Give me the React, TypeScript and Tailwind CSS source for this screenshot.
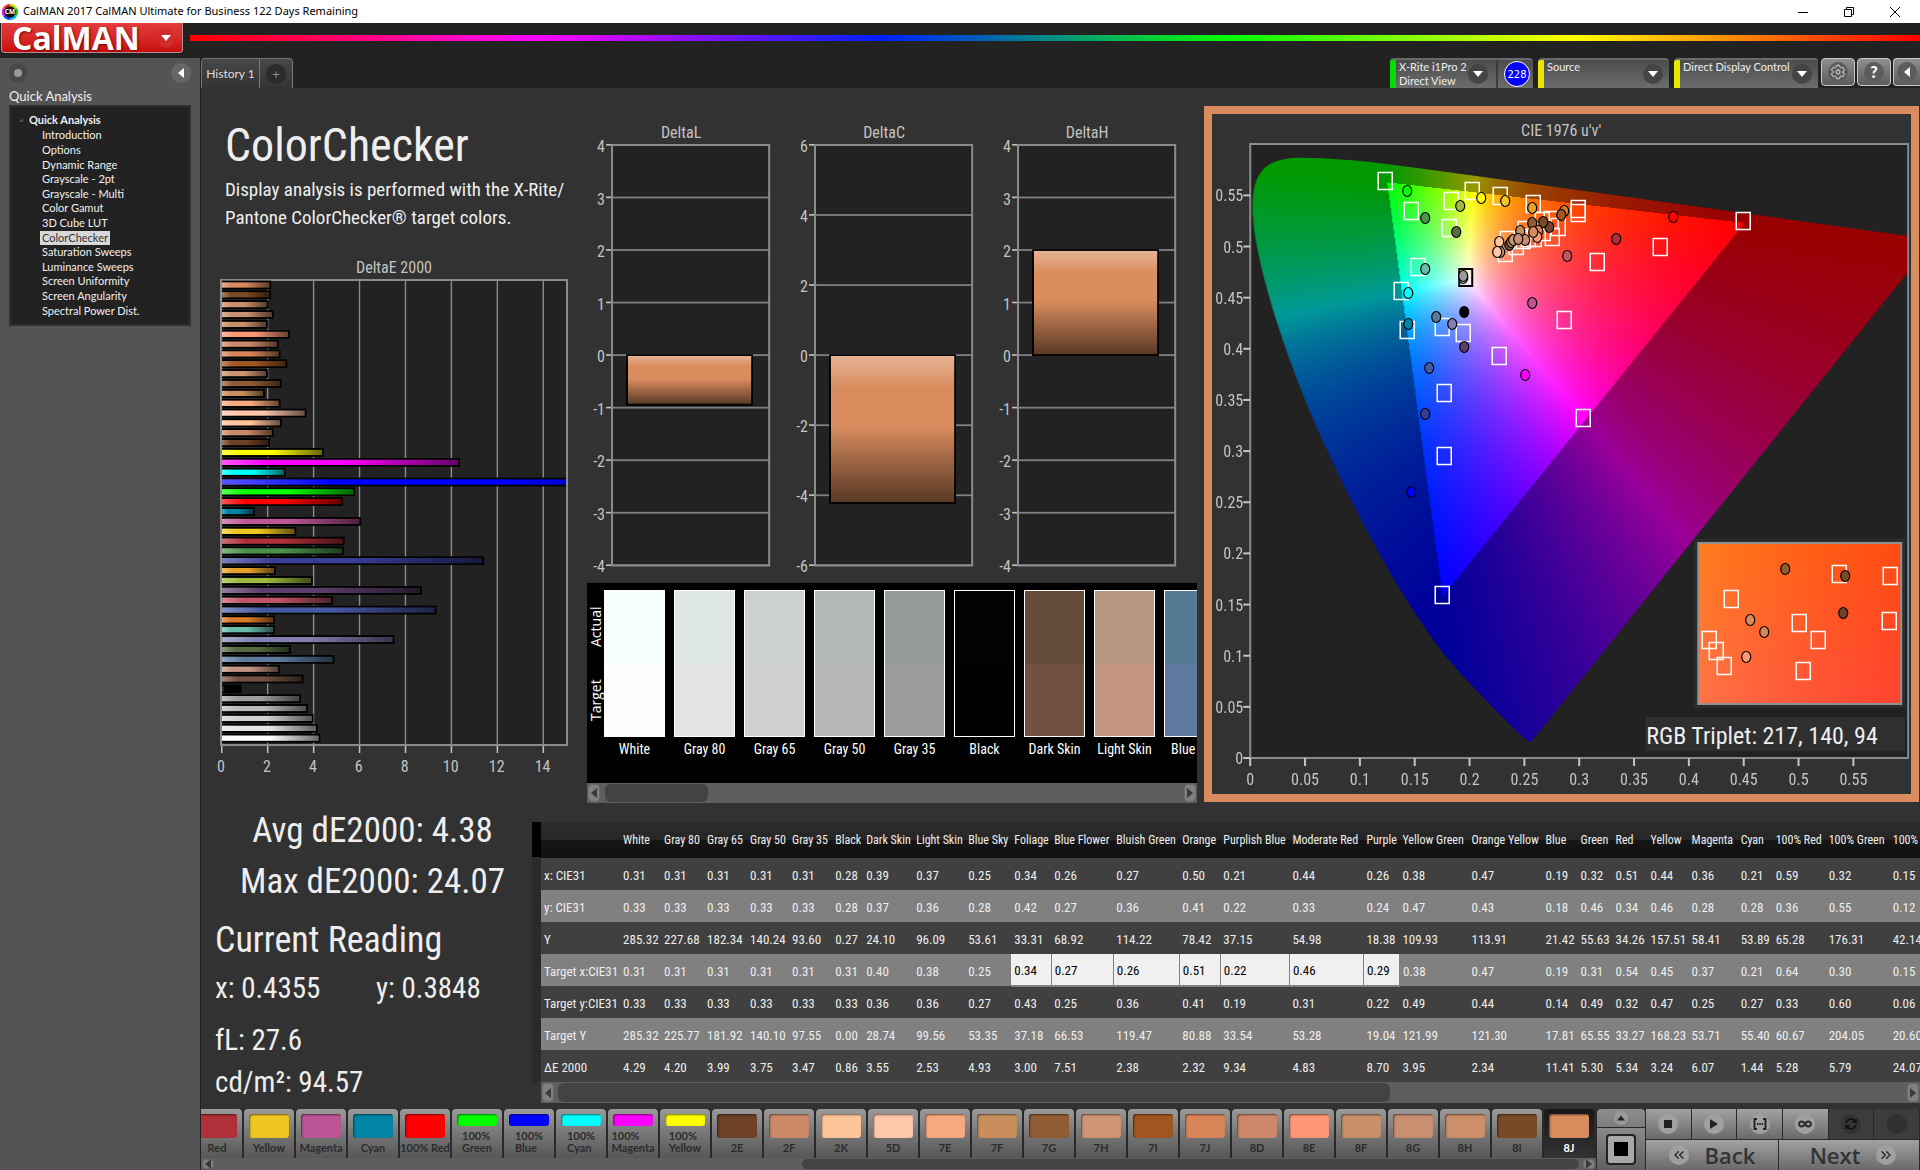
import { useEffect, useRef } from "react";
import { IoSettingsOutline } from "react-icons/io5";
import { FaInfinity, FaSyncAlt } from "react-icons/fa";
import { ChevronsLeft, ChevronsRight } from "lucide-react";
import clsx from "clsx";

const AXIS = "font-['Roboto_Condensed','Roboto',sans-serif]";

const navItems = [
  "Introduction", "Options", "Dynamic Range", "Grayscale - 2pt", "Grayscale - Multi", "Color Gamut", "3D Cube LUT",
  "ColorChecker", "Saturation Sweeps", "Luminance Sweeps", "Screen Uniformity", "Screen Angularity", "Spectral Power Dist.",
];

// [value, color], top to bottom
const deltaE: [number, string][] = [
  [2.15, "#d98c5e"], [2.15, "#7a4a25"], [2.03, "#cd8f6a"], [2.25, "#c88f70"], [2.0, "#c78f6a"], [2.95, "#fd9776"],
  [2.47, "#cf896a"], [2.55, "#d8855a"], [2.85, "#a05620"], [2.0, "#cf9573"], [2.6, "#915c33"], [1.87, "#c88f5d"],
  [2.55, "#f7a97d"], [3.68, "#fec7ab"], [2.6, "#ffc59a"], [2.25, "#cc8a68"], [2.1, "#6f4126"], [4.43, "#ffff00"],
  [10.37, "#ff00ff"], [2.77, "#00ffff"], [24.07, "#0000ff"], [5.79, "#00ff00"], [5.28, "#ff0000"], [1.44, "#0085a7"],
  [6.07, "#bb5595"], [3.24, "#edc71f"], [5.34, "#af3038"], [5.3, "#4a9449"], [11.41, "#383d96"], [2.34, "#e7a22c"],
  [3.95, "#9fba3c"], [8.7, "#5c3d6b"], [4.83, "#c35465"], [9.34, "#4659a7"], [2.32, "#d97b28"], [2.32, "#67bdaa"],
  [7.51, "#8280b0"], [3.0, "#576c41"], [4.9, "#5b7a9c"], [2.53, "#c49681"], [3.55, "#735142"], [0.86, "#000000"],
  [3.45, "#9e9e9e"], [3.75, "#b9b9b9"], [3.99, "#cfcfcf"], [4.17, "#e6e6e6"], [4.29, "#ffffff"],
];

const swatches: [string, string, string][] = [
  ["White", "#f5fffe", "#fdfdfd"],
  ["Gray 80", "#dfe7e4", "#e4e4e4"],
  ["Gray 65", "#cbd1cf", "#cfcfcf"],
  ["Gray 50", "#b4bab8", "#b8b8b8"],
  ["Gray 35", "#959998", "#9c9c9c"],
  ["Black", "#020205", "#000000"],
  ["Dark Skin", "#654b3a", "#725142"],
  ["Light Skin", "#b9967f", "#c39581"],
  ["Blue Sky", "#577a94", "#5d7a9e"],
];

const columns: [string, number][] = [
  ["White", 41], ["Gray 80", 43], ["Gray 65", 43], ["Gray 50", 42], ["Gray 35", 43], ["Black", 31], ["Dark Skin", 50],
  ["Light Skin", 52], ["Blue Sky", 46], ["Foliage", 40], ["Blue Flower", 62], ["Bluish Green", 66], ["Orange", 41],
  ["Purplish Blue", 69], ["Moderate Red", 74], ["Purple", 36], ["Yellow Green", 69], ["Orange Yellow", 74], ["Blue", 35],
  ["Green", 35], ["Red", 35], ["Yellow", 41], ["Magenta", 49], ["Cyan", 35], ["100% Red", 53], ["100% Green", 64], ["100% Blue", 64],
];

const rows: [string, string[]][] = [
  ["x: CIE31", "0.31 0.31 0.31 0.31 0.31 0.28 0.39 0.37 0.25 0.34 0.26 0.27 0.50 0.21 0.44 0.26 0.38 0.47 0.19 0.32 0.51 0.44 0.36 0.21 0.59 0.32 0.15".split(" ")],
  ["y: CIE31", "0.33 0.33 0.33 0.33 0.33 0.28 0.37 0.36 0.28 0.42 0.27 0.36 0.41 0.22 0.33 0.24 0.47 0.43 0.18 0.46 0.34 0.46 0.28 0.28 0.36 0.55 0.12".split(" ")],
  ["Y", "285.32 227.68 182.34 140.24 93.60 0.27 24.10 96.09 53.61 33.31 68.92 114.22 78.42 37.15 54.98 18.38 109.93 113.91 21.42 55.63 34.26 157.51 58.41 53.89 65.28 176.31 42.14".split(" ")],
  ["Target x:CIE31", "0.31 0.31 0.31 0.31 0.31 0.31 0.40 0.38 0.25 0.34 0.27 0.26 0.51 0.22 0.46 0.29 0.38 0.47 0.19 0.31 0.54 0.45 0.37 0.21 0.64 0.30 0.15".split(" ")],
  ["Target y:CIE31", "0.33 0.33 0.33 0.33 0.33 0.33 0.36 0.36 0.27 0.43 0.25 0.36 0.41 0.19 0.31 0.22 0.49 0.44 0.14 0.49 0.32 0.47 0.25 0.27 0.33 0.60 0.06".split(" ")],
  ["Target Y", "285.32 225.77 181.92 140.10 97.55 0.00 28.74 99.56 53.35 37.18 66.53 119.47 80.88 33.54 53.28 19.04 121.99 121.30 17.81 65.55 33.27 168.23 53.71 55.40 60.67 204.05 20.60".split(" ")],
  ["ΔE 2000", "4.29 4.20 3.99 3.75 3.47 0.86 3.55 2.53 4.93 3.00 7.51 2.38 2.32 9.34 4.83 8.70 3.95 2.34 11.41 5.30 5.34 3.24 6.07 1.44 5.28 5.79 24.07".split(" ")],
];

const patterns: [string, string][] = [
  ["Red", "#af3038"], ["Yellow", "#edc71f"], ["Magenta", "#bb5595"], ["Cyan", "#0085a7"], ["100% Red", "#ff0000"],
  ["100% Green", "#00ff00"], ["100% Blue", "#0000ff"], ["100% Cyan", "#00ffff"], ["100% Magenta", "#ff00ff"], ["100% Yellow", "#ffff00"],
  ["2E", "#6f4126"], ["2F", "#cc8a68"], ["2K", "#ffc59a"], ["5D", "#fec7ab"], ["7E", "#f7a97d"], ["7F", "#c88f5d"],
  ["7G", "#915c33"], ["7H", "#cf9573"], ["7I", "#a05620"], ["7J", "#d8855a"], ["8D", "#cf896a"], ["8E", "#fd9776"],
  ["8F", "#c78f6a"], ["8G", "#c88f70"], ["8H", "#cd8f6a"], ["8I", "#7a4a25"], ["8J", "#d98c5e"],
];

// CIE 1931 xy spectral locus
const locus = [
  [0.1741, 0.005], [0.1733, 0.0048], [0.1714, 0.0051], [0.1689, 0.0069], [0.1644, 0.0109], [0.1566, 0.0177], [0.144, 0.0297],
  [0.1355, 0.0399], [0.1241, 0.0578], [0.1096, 0.0868], [0.0913, 0.1327], [0.0687, 0.2007], [0.0454, 0.295], [0.0235, 0.4127],
  [0.0082, 0.5384], [0.0039, 0.6548], [0.0139, 0.7502], [0.0389, 0.812], [0.0743, 0.8338], [0.1142, 0.8262], [0.1547, 0.8059],
  [0.2296, 0.7543], [0.3016, 0.6923], [0.3731, 0.6245], [0.4441, 0.5547], [0.5125, 0.4866], [0.5752, 0.4242], [0.627, 0.3725],
  [0.6658, 0.334], [0.6915, 0.3083], [0.719, 0.2809], [0.7347, 0.2653],
].map(([x, y]) => {
  const d = -2 * x + 12 * y + 3;
  return [(4 * x) / d, (9 * y) / d];
});

// full brightness inside Rec.709, dimmed outside of it
const uvToRgb = (u: number, v: number) => {
  const d = 6 * u - 16 * v + 12;
  const x = (9 * u) / d;
  const y = (4 * v) / d;
  const X = x / y;
  const Z = (1 - x - y) / y;
  const lin = [
    3.2406 * X - 1.5372 - 0.4986 * Z,
    -0.9689 * X + 1.8758 + 0.0415 * Z,
    0.0557 * X - 0.204 + 1.057 * Z,
  ];
  const max = Math.max(...lin);
  const k = lin.every((c) => c >= 0) ? 255 : 153;
  return lin.map((c) => (Math.max(c, 0) / max) * k);
};

interface DiagramProps {
  u: [number, number]
  v: [number, number]
  clip?: boolean
}

const Chromaticity = ({ u, v, clip }: DiagramProps) => {
  const ref = useRef<HTMLCanvasElement>(null);

  useEffect(() => {
    const canvas = ref.current!;
    const { width: w, height: h } = canvas;
    const ctx = canvas.getContext("2d")!;
    const layer = document.createElement("canvas");
    layer.width = w;
    layer.height = h;
    const lctx = layer.getContext("2d")!;
    const image = lctx.createImageData(w, h);
    for (let py = 0; py < h; py++) {
      for (let px = 0; px < w; px++) {
        const uu = u[0] + ((px + 0.5) / w) * (u[1] - u[0]);
        const vv = v[1] - ((py + 0.5) / h) * (v[1] - v[0]);
        const [r, g, b] = uvToRgb(uu, vv);
        image.data.set([r, g, b, 255], (py * w + px) * 4);
      }
    }
    lctx.putImageData(image, 0, 0);
    ctx.clearRect(0, 0, w, h);
    ctx.save();
    if (clip) {
      const pts = locus.map(([a, b]) => [((a - u[0]) / (u[1] - u[0])) * w, ((v[1] - b) / (v[1] - v[0])) * h]);
      ctx.beginPath();
      ctx.moveTo(pts[0][0], pts[0][1]);
      for (let i = 1; i < pts.length - 1; i++) {
        ctx.quadraticCurveTo(pts[i][0], pts[i][1], (pts[i][0] + pts[i + 1][0]) / 2, (pts[i][1] + pts[i + 1][1]) / 2);
      }
      ctx.lineTo(pts[pts.length - 1][0], pts[pts.length - 1][1]);
      ctx.closePath();
      ctx.clip();
    }
    ctx.drawImage(layer, 0, 0);
    ctx.restore();
  }, [u, v, clip]);

  return <canvas ref={ref} width={658} height={614} className="block w-full h-full" />;
};

const FULL_U: [number, number] = [0, 0.6];
const FULL_V: [number, number] = [0, 0.6];
const INSET_U: [number, number] = [0.25, 0.29];
const INSET_V: [number, number] = [0.5, 0.528];

const targets = [
  [185, 81], [211, 111], [251, 101], [272, 91], [300, 96], [333, 104], [378, 109], [378, 113], [249, 128], [218, 167],
  [201, 191], [207, 230], [242, 227], [263, 233], [299, 256], [244, 293], [244, 356], [383, 318], [364, 220], [397, 162],
  [460, 147], [543, 121], [242, 495], [358, 127], [352, 137], [351, 120], [342, 121], [325, 130], [307, 140], [316, 146],
  [305, 153], [323, 140], [328, 138], [334, 138], [343, 132],
];

const measured: [number, number, string][] = [
  [207, 91, "#00ff00"], [225, 118, "#4a9449"], [260, 106, "#9fba3c"], [281, 98, "#ffff00"], [305, 101, "#edc71f"],
  [332, 108, "#e7a22c"], [256, 132, "#576c41"], [225, 169, "#67bdaa"], [208, 193, "#00ffff"], [208, 224, "#0085a7"],
  [236, 217, "#5b7a9c"], [252, 224, "#8280b0"], [264, 212, "#000000"], [264, 247, "#5c3d6b"], [229, 268, "#4659a7"],
  [225, 314, "#383d96"], [211, 392, "#0000ff"], [325, 275, "#ff00ff"], [332, 203, "#bb5595"], [367, 156, "#c35465"],
  [473, 117, "#ff0000"], [416, 139, "#af3038"], [364, 111, "#d97b28"], [361, 115, "#a05620"], [349, 127, "#73422a"],
  [343, 122, "#7a4a25"], [332, 123, "#915c33"], [320, 131, "#c68c5c"], [338, 131, "#d8855a"], [337, 137, "#fd9776"],
  [333, 132, "#d98c5e"], [309, 145, "#755140"], [311, 142, "#c78f6a"], [313, 140, "#cf9573"], [325, 140, "#cf896a"],
  [318, 139, "#c88f70"], [299, 142, "#ffc59a"], [300, 152, "#c49681"], [297, 152, "#fec7ab"], [263, 178, "#b9b9b9"],
  [263, 176, "#9a9a9a"],
];

const insetTargets = [[639, 474], [690, 476], [531, 499], [509, 540], [516, 551], [524, 566], [599, 523], [618, 540], [603, 571], [689, 521]];
const insetMeasured: [number, number, string][] = [
  [585, 469, "#915c33"], [645, 476, "#7a4a25"], [643, 513, "#73422a"], [550, 520, "#d98c5e"], [564, 532, "#d8855a"], [546, 557, "#fd9776"],
];

const Dot = ({ x, y, fill }: { x: number; y: number; fill: string }) => (
  <ellipse cx={x} cy={y} rx="4.5" ry="5.5" fill={fill} stroke="#000" strokeWidth="1.2" />
);

const Box = ({ x, y }: { x: number; y: number }) => (
  <rect x={x - 7} y={y - 8.5} width="14" height="17" fill="none" stroke="#fff" strokeWidth="1.5" />
);

const CieChart = () => {
  const ticks = Array.from({ length: 12 }, (_, i) => i);
  const label = (i: number) => String(Math.round(i * 5) / 100);
  return (
    <section className="flex-[715] border-8 border-[#d98c5e] bg-[#323232]">
      <svg viewBox="12 14 699 680" className={`block w-full h-full text-base ${AXIS}`}>
        <text x="361" y="36" textAnchor="middle" fill="#c3c3c3">CIE 1976 u'v'</text>
        <rect x="50" y="44" width="658" height="614" fill="#222" />
        <foreignObject x="50" y="44" width="658" height="614">
          <Chromaticity u={FULL_U} v={FULL_V} clip />
        </foreignObject>
        <rect x="50" y="44" width="658" height="614" fill="none" stroke="#8b8b8b" strokeWidth="2" />
        {ticks.map((i) => (
          <g key={i} fill="#c3c3c3" stroke="none">
            <text x="43" y={664 - i * 51.15} textAnchor="end">{label(i)}</text>
            <rect x="43" y={657 - i * 51.15} width="7" height="2" />
            <text x={50 + i * 54.83} y="685" textAnchor="middle">{label(i)}</text>
            <rect x={49 + i * 54.83} y="658" width="2" height="8" />
          </g>
        ))}
        {targets.map(([x, y], i) => <Box key={i} x={x} y={y} />)}
        <rect x="259" y="169" width="13" height="17" fill="none" stroke="#000" strokeWidth="2" />
        {measured.map(([x, y, c], i) => <Dot key={i} x={x} y={y} fill={c} />)}

        <rect x="494" y="439" width="211" height="169" fill="#2c2c2c" />
        <foreignObject x="498" y="443" width="203" height="161">
          <Chromaticity u={INSET_U} v={INSET_V} />
        </foreignObject>
        <rect x="498" y="443" width="203" height="161" fill="none" stroke="#909090" strokeWidth="2" />
        {insetTargets.map(([x, y], i) => <Box key={i} x={x} y={y} />)}
        {insetMeasured.map(([x, y, c], i) => <Dot key={i} x={x} y={y} fill={c} />)}
        <rect x="445" y="617" width="260" height="34" fill="#2f2f2f" />
        <text x="446" y="644" fontSize="24" fill="#eee">RGB Triplet: 217, 140, 94</text>
      </svg>
    </section>
  );
};

const DeltaEChart = () => (
  <svg viewBox="0 0 386 530" className={`block w-full text-base ${AXIS}`}>
    <defs>
      <linearGradient id="sheenX">
        <stop offset="0" stopColor="#fff" stopOpacity="0.35" />
        <stop offset="0.2" stopColor="#fff" stopOpacity="0" />
        <stop offset="0.5" stopColor="#000" stopOpacity="0" />
        <stop offset="1" stopColor="#000" stopOpacity="0.6" />
      </linearGradient>
      <clipPath id="plotE"><rect x="21" y="26" width="344" height="465" /></clipPath>
    </defs>
    <text x="193" y="19" textAnchor="middle" fill="#c3c3c3">DeltaE 2000</text>
    <rect x="20" y="26" width="346" height="465" fill="#222" />
    {[0, 2, 4, 6, 8, 10, 12, 14].map((n) => (
      <g key={n}>
        <rect x={20 + n * 22.97} y="26" width="1.4" height="465" fill="#8b8b8b" />
        <rect x={20 + n * 22.97} y="491" width="1.5" height="8" fill="#c3c3c3" />
        <text x={20 + n * 22.97} y="518" textAnchor="middle" fill="#c3c3c3">{n}</text>
      </g>
    ))}
    <rect x="20" y="26" width="346" height="465" fill="none" stroke="#8b8b8b" strokeWidth="2" />
    <g clipPath="url(#plotE)" stroke="#000" strokeWidth="1.4">
      {deltaE.map(([value, color], i) => (
        <g key={i}>
          <rect x="20" y={27.5 + i * 9.85} width={value * 22.97} height="7" fill={color} />
          <rect x="20" y={27.5 + i * 9.85} width={value * 22.97} height="7" fill="url(#sheenX)" />
        </g>
      ))}
    </g>
  </svg>
);

interface DeltaProps {
  title: string
  max: number
  step: number
  value: number
}

const DeltaChart = ({ title, max, step, value }: DeltaProps) => {
  const ticks: number[] = [];
  for (let n = max; n >= -max; n -= step) ticks.push(n);
  const y = (n: number) => 245 - (n / max) * 210;
  return (
    <svg viewBox="0 0 203 470" className={`block flex-1 min-w-0 text-base ${AXIS}`}>
      <defs>
        <linearGradient id="sheenY" x1="0" y1="0" x2="0" y2="1">
          <stop offset="0" stopColor="#fff" stopOpacity="0.35" />
          <stop offset="0.22" stopColor="#fff" stopOpacity="0" />
          <stop offset="0.48" stopColor="#000" stopOpacity="0" />
          <stop offset="1" stopColor="#000" stopOpacity="0.6" />
        </linearGradient>
      </defs>
      <text x="94" y="28" textAnchor="middle" fill="#c3c3c3">{title}</text>
      <rect x="25" y="35" width="157" height="420" fill="#222" />
      {ticks.map((n) => (
        <g key={n} fill="#c3c3c3">
          <text x="18" y={y(n) + 7} textAnchor="end">{n}</text>
          <rect x="19" y={y(n) - 1} width="6" height="1.6" />
          <rect x="25" y={y(n) - 1} width="157" height="1.8" fill="#808080" />
        </g>
      ))}
      <rect x="25" y="35" width="157" height="420" fill="none" stroke="#8b8b8b" strokeWidth="2" />
      <g stroke="#000" strokeWidth="1.5">
        <rect x="40" y={y(Math.max(value, 0))} width="125" height={(Math.abs(value) / max) * 210} fill="#d98c5e" />
        <rect x="40" y={y(Math.max(value, 0))} width="125" height={(Math.abs(value) / max) * 210} fill="url(#sheenY)" />
      </g>
    </svg>
  );
};

const ScrollArrow = ({ dir }: { dir: "left" | "right" }) => (
  <button aria-label={`Scroll ${dir}`} className="flex items-center justify-center w-3 h-full shrink-0 rounded bg-[#808080] border border-[#6c6c6c]">
    <svg viewBox="0 0 6 10" className="w-1.5 h-3"><path d={dir === "left" ? "M6 0v10L0 5z" : "M0 0v10l6-5z"} fill="#3a3a3a" /></svg>
  </button>
);

const ScrollBar = ({ className, before, thumb }: { className: string; before: string; thumb: string }) => (
  <div className={clsx("flex items-stretch gap-1 bg-[#5e5e5e] p-px", className)}>
    <ScrollArrow dir="left" />
    <div className="flex flex-1">
      <div className={before}></div>
      <div className={clsx("rounded-md bg-[#434343]", thumb)}></div>
    </div>
    <ScrollArrow dir="right" />
  </div>
);

const ROUND = "flex items-center justify-center shrink-0 rounded-full";

const DeviceBox = ({ lines, stripe, className, badge }: { lines: string[]; stripe: string; className: string; badge?: string }) => (
  <div className={clsx("flex rounded-t border-t-2 border-[#6a6a6a] bg-linear-to-b from-[#4c4c4c] to-[#6c6c6c] overflow-hidden", className)}>
    <button className="flex flex-1 items-stretch text-left">
      <span className={clsx("w-1.5 shrink-0", stripe)}></span>
      <span className="flex-1 pl-[3px] text-[11px] leading-[14px] text-[#eee] whitespace-nowrap">
        {lines.map((l) => <span key={l} className="block">{l}</span>)}
      </span>
      <span className={clsx(ROUND, "w-5 h-5 mt-1 -ml-4 bg-[#454545]", badge ? "mr-2" : "mr-1.5")}>
        <svg viewBox="0 0 10 6" className="w-2.5 h-1.5"><path d="M0 0h10L5 6z" fill="#fff" /></svg>
      </span>
    </button>
    {badge && (
      <div className="flex items-center w-[37px] border-l-2 border-[#3c3c3c] pl-1.5">
        <span className={`${ROUND} size-[26px] border border-white bg-[#0000ff] text-[10px] text-white font-['DejaVu_Sans',sans-serif]`}>{badge}</span>
      </div>
    )}
  </div>
);

const TOOL = "flex items-center justify-center h-7 rounded border border-[#c8c8c8] bg-linear-to-b from-[#8f8f8f] to-[#5c5c5c]";

const Header = () => (
  <>
    <div className="flex items-center h-[23px] bg-white text-black font-['Noto_Sans',sans-serif] text-[11px]">
      <svg viewBox="0 0 16 16" className="w-4 h-4 ml-0.5 mr-[5px]">
        <path d="M8 0a8 8 0 0 1 7 4L8 8z" fill="#b5e000" />
        <path d="M15 4a8 8 0 0 1 0 8L8 8z" fill="#20c020" />
        <path d="M15 12a8 8 0 0 1-7 4V8z" fill="#00b8f0" />
        <path d="M8 16a8 8 0 0 1-7-4l7-4z" fill="#3040ff" />
        <path d="M1 12a8 8 0 0 1 0-8l7 4z" fill="#d010e0" />
        <path d="M1 4a8 8 0 0 1 7-4v8z" fill="#ff3030" />
        <circle cx="8" cy="8" r="5.8" fill="#111" />
        <text x="8" y="10.4" textAnchor="middle" fontSize="6.5" fontWeight="bold" fill="#fff">CM</text>
      </svg>
      <h1>CalMAN 2017 CalMAN Ultimate for Business 122 Days Remaining</h1>
      <div className="flex ml-auto pr-0.5">
        <button aria-label="Minimize" className="flex items-center justify-center w-[46px] h-[23px]">
          <svg viewBox="0 0 10 10" className="size-2.5"><path d="M0 5.5h10" stroke="#000" /></svg>
        </button>
        <button aria-label="Restore" className="flex items-center justify-center w-[46px] h-[23px]">
          <svg viewBox="0 0 10 10" className="size-2.5"><path d="M.5 2.5h7v7h-7zM2.5 2.5v-2h7v7h-2" fill="none" stroke="#000" /></svg>
        </button>
        <button aria-label="Close" className="flex items-center justify-center w-[46px] h-[23px]">
          <svg viewBox="0 0 10 10" className="size-2.5"><path d="M0 0l10 10M10 0L0 10" stroke="#000" /></svg>
        </button>
      </div>
    </div>
    <div className="flex items-start h-[35px] pl-px bg-[#222]">
      <button className="flex items-center justify-between w-[182px] h-[30px] pl-2.5 pr-2 rounded-b border border-t-0 border-[#b89090] bg-linear-to-b from-[#e23c3c] to-[#c80c0c]">
        <span className="font-['Open_Sans',sans-serif] font-bold text-[32px] leading-7 text-white [text-shadow:1px_1px_2px_#700]">CalMAN</span>
        <span className={`${ROUND} w-4 h-5 bg-[#d02c2c]`}>
          <svg viewBox="0 0 10 6" className="w-2.5 h-1.5"><path d="M0 0h10L5 6z" fill="#fff" /></svg>
        </span>
      </button>
      <div className="flex-1 h-1.5 mt-3 ml-[7px] bg-[linear-gradient(90deg,#ff0000,#ff00ff_20%,#0020ff_40%,#00ff00_60%,#ffff00_80%,#ff0000)]"></div>
    </div>
  </>
);

const Sidebar = () => (
  <aside className="w-[200px] shrink-0 px-[9px] bg-[#545454] text-[#f0f0f0]">
    <div className="flex items-center justify-between h-[29px]">
      <button aria-label="Pin" className={`${ROUND} w-[18px] h-5 bg-[#484848]`}><span className="size-2 rounded-full bg-[#999]"></span></button>
      <button aria-label="Collapse" className={`${ROUND} w-5 h-5 bg-[#666]`}>
        <svg viewBox="0 0 6 10" className="w-1.5 h-2.5"><path d="M6 0v10L0 5z" fill="#fff" /></svg>
      </button>
    </div>
    <h2 className="h-[18px] leading-[18px] text-[13px]">Quick Analysis</h2>
    <nav className="h-[221px] pt-[5px] border-2 border-[#303030] bg-[#222] text-[11px]">
      <div className="flex items-center h-4 font-bold">
        <svg viewBox="0 0 5 5" className="size-1 ml-2 mr-1.5"><path d="M5 0v5H0z" fill="#555" /></svg>
        Quick Analysis
      </div>
      <ul className="flex flex-col h-[190px] pl-[29px]">
        {navItems.map((item) => (
          <li key={item} className="flex flex-1 items-center">
            <a href="#" className={clsx("leading-[14px] px-0.5", item === "ColorChecker" && "bg-[#d8d8d8] text-[#333]")}>{item}</a>
          </li>
        ))}
      </ul>
    </nav>
  </aside>
);

const Swatches = () => (
  <div className="mt-[3px]">
    <div className="flex h-[200px] bg-black pt-[7px] overflow-hidden">
      <div className="flex justify-around w-[17px] h-[147px] shrink-0 font-['Open_Sans',sans-serif] text-[14px] text-white leading-[17px] [writing-mode:vertical-rl] rotate-180">
        <span>Target</span>
        <span>Actual</span>
      </div>
      <div className="flex gap-[9px] w-0 flex-1">
        {swatches.map(([name, actual, target]) => (
          <figure key={name} className="w-[61px] shrink-0">
            <div className="flex flex-col h-[147px] border border-white">
              <div className="flex-1" style={{ background: actual }}></div>
              <div className="flex-1" style={{ background: target }}></div>
            </div>
            <figcaption className={`text-center text-sm leading-6 text-white whitespace-nowrap ${AXIS}`}>{name}</figcaption>
          </figure>
        ))}
      </div>
    </div>
    <ScrollBar className="h-5" before="w-px" thumb="w-[103px]" />
  </div>
);

const Readings = () => (
  <div className={`w-[331px] shrink-0 pt-0.5 text-[#eee] ${AXIS}`}>
    <div className="pl-3 text-center text-[35px] leading-[51px]">
      <p>Avg dE2000: 4.38</p>
      <p>Max dE2000: 24.07</p>
    </div>
    <div className="pl-3.5">
      <p className="mt-2 text-[36px] leading-[51px]">Current Reading</p>
      <p className="flex text-[29px] leading-[45px]">
        <span className="w-[161px]">x: 0.4355</span>
        <span>y: 0.3848</span>
      </p>
      <p className="mt-2 text-[29px] leading-[42px]">fL: 27.6</p>
      <p className="text-[29px] leading-[42px]">cd/m²: 94.57</p>
    </div>
  </div>
);

const ReadingsTable = () => (
  <div className="flex flex-1 min-w-0 mt-[19px]">
    <div className="w-[9px] shrink-0 h-[260px] border-t-[35px] border-black bg-[#2a2a2a]"></div>
    <div className="flex-1 min-w-0">
      <div className="overflow-hidden">
        <table className={`table-fixed w-[1413px] text-left whitespace-nowrap text-[#eee] ${AXIS}`}>
          <colgroup>
            <col className="w-[79px]" />
            {columns.map(([name, w]) => <col key={name} style={{ width: w }} />)}
          </colgroup>
          <thead>
            <tr className="h-9 text-xs bg-[linear-gradient(#2c2c2c,#262626_50%,#161616_50%,#101010)]">
              <th></th>
              {columns.map(([name]) => <th key={name} className="pl-[3px] font-normal">{name}</th>)}
            </tr>
          </thead>
          <tbody className="text-[13px]">
            {rows.map(([label, cells]) => (
              <tr key={label} className="h-8 odd:bg-[#404040] even:bg-[#808080]">
                <th className="pl-[3px] pt-0.5 font-normal">{label}</th>
                {cells.map((cell, i) => (
                  <td key={i} className={clsx("pl-[3px] pt-0.5", label === "Target x:CIE31" && i > 8 && i < 16 && "bg-[#f0f0f0] text-black border-r border-b-2 border-[#808080]")}>{cell}</td>
                ))}
              </tr>
            ))}
          </tbody>
        </table>
      </div>
      <ScrollBar className="h-[21px]" before="w-0" thumb="w-[832px]" />
    </div>
  </div>
);

const PatternStrip = () => (
  <div className="flex-1 min-w-0 overflow-hidden">
    <div className="flex gap-0.5 h-[49px] -ml-[9px]">
      {patterns.map(([name, color]) => {
        const active = name === "8J";
        const words = name.split(" ");
        const tall = words.length > 1 && name !== "100% Red";
        return (
          <button
            key={name}
            className={clsx(
              "flex flex-col items-center w-[50px] shrink-0 pt-[5px] rounded-t text-[11px] leading-[12px] font-bold bg-linear-to-b",
              active ? "from-[#181818] to-[#333] text-white" : "from-[#9a9a9a] to-[#575757] text-[#2c2c2c]"
            )}
          >
            <span className={clsx("w-10 rounded-[3px] shadow-[inset_1px_1px_2px_#0008]", tall ? "h-3" : "h-6")} style={{ background: color }}></span>
            {tall ? (
              <span className="mt-1 text-left">{words[0]}<br />{words[1]}</span>
            ) : (
              <span className="mt-1 whitespace-nowrap">{name}</span>
            )}
          </button>
        );
      })}
    </div>
    <ScrollBar className="h-3" before="flex-[588]" thumb="flex-[782]" />
  </div>
);

const DISC = `${ROUND} size-5 bg-[#a0a0a0] text-[#2a2a2a]`;
const KEY = "flex items-center justify-center flex-1 bg-linear-to-b from-[#a2a2a2] to-[#6a6a6a]";
const KEY_OFF = "flex items-center justify-center flex-1 bg-[#3c3c3c]";

const Transport = () => (
  <div className="flex gap-px shrink-0">
    <div className="flex flex-col gap-px w-12">
      <button aria-label="Expand" className="flex items-center justify-center h-[18px] rounded-t bg-linear-to-b from-[#8e8e8e] to-[#7c7c7c]">
        <span className={`${ROUND} size-3.5 bg-[#9a9a9a]`}><svg viewBox="0 0 8 5" className="w-2 h-1.5"><path d="M0 5h8L4 0z" fill="#222" /></svg></span>
      </button>
      <button aria-label="Pattern window" className="flex items-center justify-center flex-1 bg-linear-to-b from-[#8a8a8a] to-[#606060]">
        <span className="flex items-center justify-center w-[30px] h-[31px] rounded border-2 border-[#222] bg-[#a8a8a8]">
          <span className="size-3.5 bg-black"></span>
        </span>
      </button>
    </div>
    <div className="flex flex-col gap-px w-[273px]">
      <div className="flex gap-px h-[30px]">
        <button aria-label="Stop" className={KEY}><span className={DISC}><span className="size-2 bg-[#222]"></span></span></button>
        <button aria-label="Play" className={KEY}>
          <span className={DISC}><svg viewBox="0 0 8 10" className="w-2 h-2.5"><path d="M0 0v10l8-5z" fill="#222" /></svg></span>
        </button>
        <button aria-label="Read series" className={KEY}>
          <span className={DISC}>
            <svg viewBox="0 0 14 12" className="w-3.5 h-3"><path d="M4 1H1.500v10H4M10 1h2.500v10H10M4 6h1.500M6.300 6h1.500M8.600 6h1.500" fill="none" stroke="#222" strokeWidth="2" /></svg>
          </span>
        </button>
        <button aria-label="Read continuously" className={KEY}><span className={DISC}><FaInfinity className="size-3.5" /></span></button>
        <button aria-label="Refresh" className={KEY_OFF}><span className={`${ROUND} size-5 bg-[#333] text-[#111]`}><FaSyncAlt className="size-3" /></span></button>
        <button aria-label="Record" className={KEY_OFF}><span className={`${ROUND} size-5 bg-[#303030]`}></span></button>
      </div>
      <div className="flex gap-px flex-1 font-['Open_Sans',sans-serif] font-semibold text-[22px] leading-7 text-[#333]">
        <button className={`${KEY} gap-4`}><span className={DISC}><ChevronsLeft className="size-4" /></span>Back</button>
        <button className={`${KEY} gap-4 pl-2`}>Next<span className={DISC}><ChevronsRight className="size-4" /></span></button>
      </div>
    </div>
  </div>
);

const App = () => {
  return (
    <div className="flex flex-col min-h-screen overflow-hidden bg-[#222] font-['Lato',sans-serif]">
      <Header />
      <div className="flex flex-1">
        <Sidebar />
        <main className="flex flex-col flex-1 min-w-0 border-l border-[#222]">
          <div className="flex items-end h-[30px]">
            <div className="flex h-[30px] rounded-t border border-b-0 border-[#777] bg-linear-to-b from-[#484848] to-[#333] text-[#ddd]">
              <button className="w-[57px] text-[12px] whitespace-nowrap">History 1</button>
              <button aria-label="Add history" className="flex items-center justify-center w-[33px] border-l border-[#777]">
                <span className={`${ROUND} size-5 bg-[#2c2c2c] text-sm text-[#888]`}>+</span>
              </button>
            </div>
            <div className="flex items-start gap-[5px] h-[30px] ml-auto">
              <DeviceBox lines={["X-Rite i1Pro 2", "Direct View"]} stripe="bg-[#00e000]" badge="228" className="w-[143px] h-[30px]" />
              <DeviceBox lines={["Source"]} stripe="bg-[#e8e800]" className="w-[131px] h-[30px]" />
              <DeviceBox lines={["Direct Display Control"]} stripe="bg-[#e8e800]" className="w-[144px] h-[30px]" />
              <div className="flex gap-0.5 -ml-0.5">
                <button aria-label="Settings" className={`${TOOL} w-[34px]`}>
                  <span className={`${ROUND} size-5 bg-[#5c5c5c] text-[#ddd]`}><IoSettingsOutline className="size-4" /></span>
                </button>
                <button aria-label="Help" className={`${TOOL} w-[34px]`}>
                  <span className={`${ROUND} size-5 bg-[#5c5c5c] text-white text-base font-black`}>?</span>
                </button>
                <button aria-label="Collapse panel" className={`${TOOL} w-[27px] rounded-r-none border-r-0`}>
                  <span className={`${ROUND} size-5 bg-[#5c5c5c]`}><svg viewBox="0 0 6 10" className="w-1.5 h-2.5"><path d="M6 0v10L0 5z" fill="#fff" /></svg></span>
                </button>
              </div>
            </div>
          </div>

          <div className="flex flex-col flex-1 bg-[#323232]">
            <div className="flex">
              <div className="w-[386px] shrink-0">
                <div className={`pt-[30px] pl-6 text-[#eee] ${AXIS}`}>
                  <h2 className="text-[46px] leading-[54px]">ColorChecker</h2>
                  <p className="mt-1 text-[19px] leading-7 whitespace-nowrap">Display analysis is performed with the X-Rite/<br />Pantone ColorChecker® target colors.</p>
                </div>
                <div className="mt-[22px]">
                  <DeltaEChart />
                </div>
              </div>
              <div className="flex-[610] min-w-0 pt-[22px]">
                <div className="flex">
                  <DeltaChart title="DeltaL" max={4} step={1} value={-0.94} />
                  <DeltaChart title="DeltaC" max={6} step={2} value={-4.22} />
                  <DeltaChart title="DeltaH" max={4} step={1} value={2} />
                </div>
                <Swatches />
              </div>
              <div className="flex flex-[716] min-w-0 pt-[18px] pl-[7px] pr-px h-[714px]">
                <CieChart />
              </div>
            </div>

            <div className="flex">
              <Readings />
              <ReadingsTable />
            </div>

            <div className="flex gap-px mt-auto pr-px bg-[#2a2a2a]">
              <PatternStrip />
              <Transport />
            </div>
          </div>
        </main>
      </div>
    </div>
  );
};

export default App;
